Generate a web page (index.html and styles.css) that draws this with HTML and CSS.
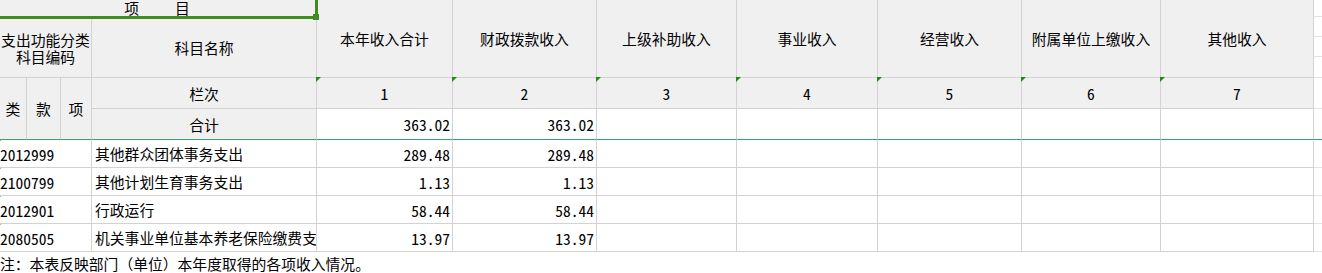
FILE: index.html
```html
<!DOCTYPE html>
<html lang="zh-CN">
<head>
<meta charset="utf-8">
<title>收入总表</title>
<link rel="stylesheet" href="styles.css">
</head>
<body>
<div class="sheet">
  <div class="c hd title">项<span class="gap"></span>目<span class="handle"></span></div>
  <div class="c hd top col5">本年收入合计</div>
  <div class="c hd top col6">财政拨款收入</div>
  <div class="c hd top col7">上级补助收入</div>
  <div class="c hd top col8">事业收入</div>
  <div class="c hd top col9">经营收入</div>
  <div class="c hd top col10">附属单位上缴收入</div>
  <div class="c hd top col11">其他收入</div>
  <div class="c ext ext1"></div>
  <div class="c ext ext2"></div>

  <div class="c hd codehd">支出功能分类<br>科目编码</div>
  <div class="c hd namehd">科目名称</div>

  <div class="c hd lv lv1">类</div>
  <div class="c hd lv lv2">款</div>
  <div class="c hd lv lv3">项</div>
  <div class="c hd lanci">栏次</div>
  <div class="c hd idx col5 mark">1</div>
  <div class="c hd idx col6 mark">2</div>
  <div class="c hd idx col7 mark">3</div>
  <div class="c hd idx col8 mark">4</div>
  <div class="c hd idx col9 mark">5</div>
  <div class="c hd idx col10 mark">6</div>
  <div class="c hd idx col11 mark">7</div>
  <div class="c ext ext3"></div>

  <div class="c hd total">合计</div>
  <div class="c sum num col5">363.02</div>
  <div class="c sum num col6">363.02</div>
  <div class="c sum col7"></div>
  <div class="c sum col8"></div>
  <div class="c sum col9"></div>
  <div class="c sum col10"></div>
  <div class="c sum col11"></div>
  <div class="c ext ext4"></div>

  <div class="c code num tri">2012999</div>
  <div class="c name">其他群众团体事务支出</div>
  <div class="c num">289.48</div>
  <div class="c num">289.48</div>
  <div class="c"></div><div class="c"></div><div class="c"></div><div class="c"></div><div class="c"></div>
  <div class="c ext"></div>

  <div class="c code num tri">2100799</div>
  <div class="c name">其他计划生育事务支出</div>
  <div class="c num">1.13</div>
  <div class="c num">1.13</div>
  <div class="c"></div><div class="c"></div><div class="c"></div><div class="c"></div><div class="c"></div>
  <div class="c ext"></div>

  <div class="c code num tri">2012901</div>
  <div class="c name">行政运行</div>
  <div class="c num">58.44</div>
  <div class="c num">58.44</div>
  <div class="c"></div><div class="c"></div><div class="c"></div><div class="c"></div><div class="c"></div>
  <div class="c ext"></div>

  <div class="c code num tri">2080505</div>
  <div class="c name">机关事业单位基本养老保险缴费支</div>
  <div class="c num">13.97</div>
  <div class="c num">13.97</div>
  <div class="c"></div><div class="c"></div><div class="c"></div><div class="c"></div><div class="c"></div>
  <div class="c ext"></div>

  <div class="note">注：本表反映部门（单位）本年度取得的各项收入情况。</div>
</div>
</body>
</html>
```

FILE: styles.css
```css
html, body {
  margin: 0;
  padding: 0;
  background: #ffffff;
}

body {
  width: 1322px;
  height: 273px;
  overflow: hidden;
  font-family: "Noto Sans CJK SC", "Noto Sans", sans-serif;
  font-size: 14.8px;
  color: #000;
}

.sheet {
  display: grid;
  grid-template-columns: 27px 34px 31px 225px 136px 144px 140px 141px 144px 139px 153px 1fr;
  grid-template-rows: 17px 61px 31px 31px 28px 28px 28px 28px auto;
  width: 1322px;
}

.c {
  box-sizing: border-box;
  border-right: 1px solid #d2d2d2;
  border-bottom: 1px solid #d2d2d2;
  display: flex;
  align-items: center;
  white-space: nowrap;
  overflow: hidden;
  background: #ffffff;
}

.hd {
  background: #f0f0f0;
  justify-content: center;
  text-align: center;
}

.title {
  grid-column: 1 / 5;
  grid-row: 1;
  position: relative;
  overflow: visible;
  z-index: 2;
  line-height: 16px;
  padding-right: 2px;
}

.title::after {
  content: "";
  position: absolute;
  left: -10px;
  top: -10px;
  right: -2px;
  bottom: -3px;
  border: 3px solid #3f8d1f;
  pointer-events: none;
}

.title .gap {
  display: inline-block;
  width: 36px;
}

.handle {
  position: absolute;
  left: 313px;
  top: 14px;
  width: 6px;
  height: 6px;
  background: #3f8d1f;
  z-index: 3;
}

.top { grid-row: 1 / 3; }
.col5 { grid-column: 5; }
.col6 { grid-column: 6; }
.col7 { grid-column: 7; }
.col8 { grid-column: 8; }
.col9 { grid-column: 9; }
.col10 { grid-column: 10; }
.col11 { grid-column: 11; }

.ext {
  border-right: none;
  border-bottom-color: #e2e2e2;
  background: #ffffff;
}
.ext1 { grid-column: 12; grid-row: 1; }
.ext2 {
  grid-column: 12;
  grid-row: 2;
  background: linear-gradient(to bottom, transparent 19px, #e2e2e2 19px, #e2e2e2 20px, transparent 20px, transparent 39px, #e2e2e2 39px, #e2e2e2 40px, transparent 40px);
}
.ext3 { grid-column: 12; grid-row: 3; }
.ext4 { grid-column: 12; grid-row: 4; border-bottom-color: #33a46e; }

.codehd {
  grid-column: 1 / 4;
  grid-row: 2;
  line-height: 17px;
  padding-top: 1px;
}

.namehd {
  grid-column: 4;
  grid-row: 2;
  padding-top: 1px;
}

.lv {
  grid-row: 3 / 5;
  border-bottom-color: #33a46e;
}
.lv1 { grid-column: 1; }
.lv2 { grid-column: 2; }
.lv3 { grid-column: 3; }

.lanci { grid-column: 4; grid-row: 3; }

.idx {
  grid-row: 3;
}

.num {
  font-family: "Noto Sans Mono CJK SC", "Liberation Mono", monospace;
  font-size: 15.5px;
  justify-content: flex-end;
  padding-right: 2px;
}

.idx.num, .idx {
  font-family: "Noto Sans Mono CJK SC", "Liberation Mono", monospace;
  font-size: 15.5px;
}

.mark {
  position: relative;
  overflow: visible;
}

.mark::before {
  content: "";
  position: absolute;
  left: -1px;
  top: -1px;
  width: 0;
  height: 0;
  border-top: 5px solid #1f8a10;
  border-right: 5px solid transparent;
}

.total {
  grid-column: 4;
  grid-row: 4;
  border-bottom-color: #33a46e;
}

.sum {
  grid-row: 4;
  border-bottom-color: #33a46e;
}

.code {
  grid-column: span 3;
  justify-content: flex-start;
  padding: 0;
  position: relative;
  overflow: visible;
}

.tri::before {
  content: "";
  position: absolute;
  left: -3px;
  top: 0;
  width: 0;
  height: 0;
  border-top: 4px solid #1f8a10;
  border-right: 4px solid transparent;
}

.name {
  padding-left: 3px;
  justify-content: flex-start;
}

.note {
  grid-column: 1 / -1;
  height: 22px;
  line-height: 24px;
  white-space: nowrap;
}
```
